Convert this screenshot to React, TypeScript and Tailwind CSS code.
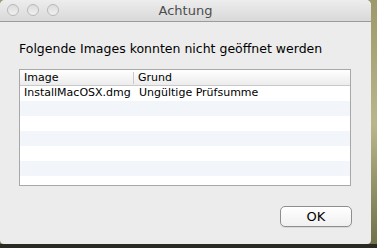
import React from 'react';

const rows = [
    { image: 'InstallMacOSX.dmg', grund: 'Ungültige Prüfsumme' },
    { image: '', grund: '' },
    { image: '', grund: '' },
    { image: '', grund: '' },
    { image: '', grund: '' },
    { image: '', grund: '' },
];

const App: React.FC = () => {
    return (
        <div
            className="w-[377px] h-[248px] overflow-hidden flex flex-col bg-gradient-to-b from-[#9c9a6a] via-[#b9b78a] to-[#6f7048]"
            style={{ fontFamily: '"DejaVu Sans", "Noto Sans", sans-serif' }}
        >
            <div className="flex">
                {/* Window */}
                <div className="w-[371px] h-[244px] bg-[#ececec] rounded-t-[5px] rounded-b-[4px] flex flex-col overflow-hidden">
                    {/* Title bar */}
                    <div className="h-[22px] shrink-0 relative flex items-center justify-center bg-gradient-to-b from-[#ededed] to-[#d9d9d9] border-b border-[#9b9b9b]">
                        <div className="absolute left-[7px] top-[4px] flex gap-[8px]">
                            <span className="w-[12px] h-[12px] rounded-full border border-[#b8b8b8] bg-gradient-to-b from-[#dcdcdc] to-[#f0f0f0]" />
                            <span className="w-[12px] h-[12px] rounded-full border border-[#b8b8b8] bg-gradient-to-b from-[#dcdcdc] to-[#f0f0f0]" />
                            <span className="w-[12px] h-[12px] rounded-full border border-[#b8b8b8] bg-gradient-to-b from-[#dcdcdc] to-[#f0f0f0]" />
                        </div>
                        <span className="text-[13px] text-[#4d4d4d] leading-none">Achtung</span>
                    </div>

                    {/* Content */}
                    <div className="flex flex-col px-[19px]">
                        <p className="mt-[19px] text-[12.5px] leading-[16px] text-black">
                            Folgende Images konnten nicht geöffnet werden
                        </p>

                        <div className="mt-[12px] w-[332px] h-[117px] border border-[#a8a8a8] bg-white overflow-hidden">
                            <div className="h-[16px] flex items-center text-[11px] text-black bg-gradient-to-b from-white to-[#ececec] border-b border-[#c9c9c9]">
                                <div className="w-[114px] pl-[4px] border-r border-[#c8c8c8] leading-[12px]">Image</div>
                                <div className="pl-[4px] leading-[12px]">Grund</div>
                            </div>
                            {rows.map((r, i) => (
                                <div
                                    key={i}
                                    className={`h-[15px] flex items-center text-[11px] text-black ${i % 2 === 1 ? 'bg-[#f2f5fa]' : 'bg-white'}`}
                                >
                                    <div className="w-[115px] pl-[4px]">{r.image}</div>
                                    <div className="pl-[4px]">{r.grund}</div>
                                </div>
                            ))}
                        </div>

                        <div className="flex justify-end mt-[20px]">
                            <button className="w-[72px] h-[21px] rounded-[5px] border border-[#8e8e8e] bg-gradient-to-b from-white to-[#f0f0f0] text-[13px] leading-none text-black shadow-[0_1px_0_rgba(0,0,0,0.08)]">
                                OK
                            </button>
                        </div>
                    </div>
                </div>
                <div className="flex-1" />
            </div>
            <div className="flex-1 bg-[#2a2a22]" />
        </div>
    );
};

export default App;
